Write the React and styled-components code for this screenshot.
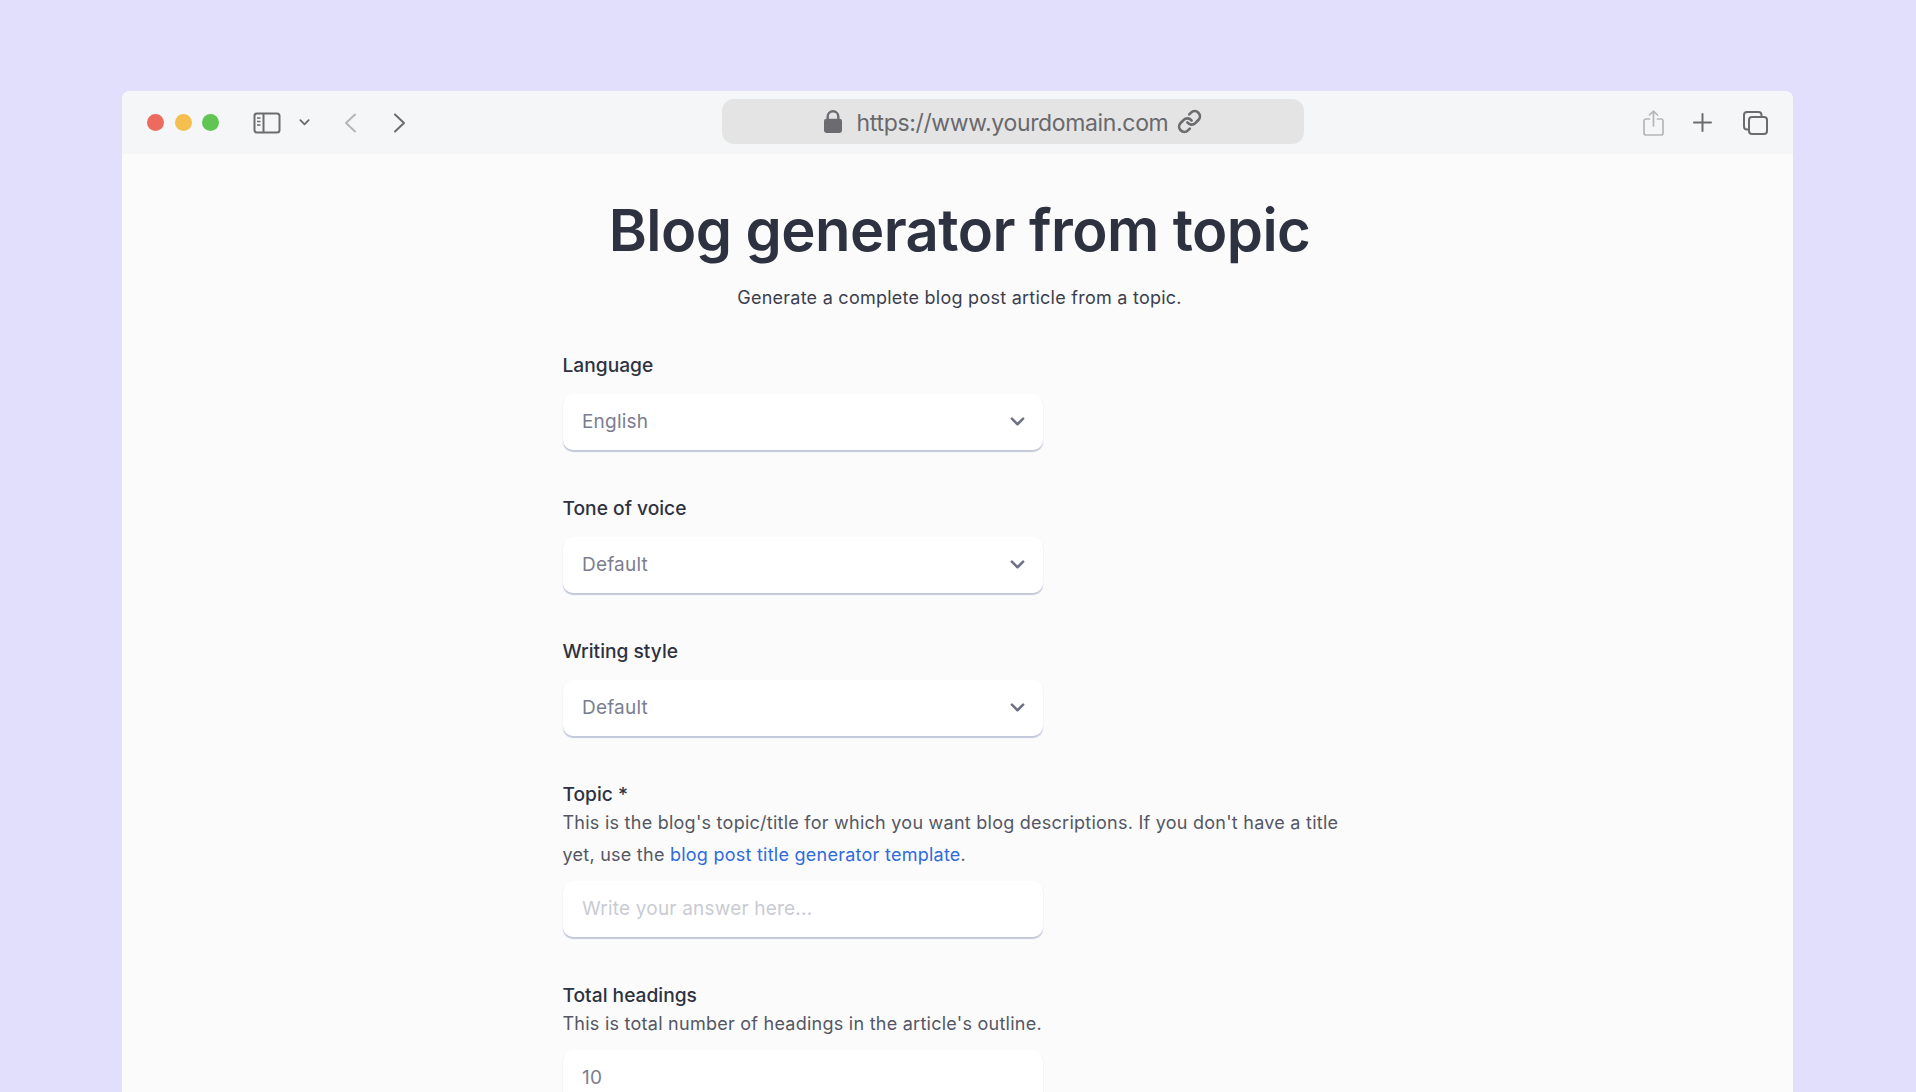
import React from "react";
import styled, { createGlobalStyle } from "styled-components";

const Global = createGlobalStyle`
  html, body { margin: 0; padding: 0; height: 100%; overflow: hidden; background: #e1dffc; }
  * { box-sizing: border-box; }
  body { font-family: Inter, "Liberation Sans", sans-serif; }
`;

const Page = styled.div`
  height: 1092px;
  overflow: hidden;
  padding: 91px 123px 0 122px;
  background: #e1dffc;
`;
const Win = styled.div`
  height: 1001px;
  background: #fbfbfc;
  border-radius: 8px 8px 0 0;
  overflow: hidden;
`;
const Toolbar = styled.header`
  height: 63px;
  background: #f5f6f7;
  display: flex;
  align-items: center;
  padding: 0 25px 0 25px;
  position: relative;
`;
const Dots = styled.div`
  display: flex;
  gap: 10.5px;
`;
const Dot = styled.span`
  width: 17px;
  height: 17px;
  border-radius: 50%;
  background: ${(p) => p.$c};
`;
const NavGroup = styled.div`
  display: flex;
  align-items: center;
  margin-left: 34px;
  width: 176px;
  & > svg { flex: none; display: block; }
`;
const Address = styled.div`
  width: 582px;
  height: 45px;
  margin-left: 293px;
  margin-top: -2px;
  border-radius: 12px;
  background: #e4e4e4;
  display: flex;
  align-items: center;
  justify-content: center;
  color: #69696c;
  font-size: 23px;
  letter-spacing: -0.35px;
  white-space: nowrap;
  & > svg { flex: none; }
`;
const Url = styled.span`
  margin: 2px 9px 0 15px;
`;
const Tools = styled.div`
  margin-left: auto;
  display: flex;
  align-items: center;
  & > svg { flex: none; display: block; }
`;
const Body = styled.main`
  padding: 44px 0 0 4px;
`;
const Title = styled.h1`
  margin: 0;
  text-align: center;
  font-size: 58px;
  line-height: 64px;
  font-weight: 600;
  color: #2e3240;
  letter-spacing: -0.55px;
`;
const Sub = styled.p`
  margin: 22px 0 0;
  text-align: center;
  font-size: 18px;
  line-height: 28px;
  color: #3b3f4d;
  letter-spacing: 0.25px;
`;
const Form = styled.form`
  width: 794px;
  margin: 39px auto 0;
`;
const Field = styled.div`
  margin-bottom: 44.5px;
`;
const Label = styled.div`
  font-size: 19.2px;
  line-height: 28px;
  font-weight: 500;
  color: #2e3240;
`;
const Help = styled.div`
  font-size: 18px;
  line-height: 32px;
  color: #545763;
  letter-spacing: 0.25px;
  margin-top: -1px;
`;
const HelpLink = styled.a`
  color: #2f6bdc;
  text-decoration: none;
`;
const Control = styled.div`
  width: 480px;
  height: 55.5px;
  margin-top: ${(p) => p.$mt ?? 15}px;
  background: #fff;
  border-radius: 10px;
  box-shadow: 0 1.5px 1px rgba(185, 190, 212, 0.85);
  display: flex;
  align-items: center;
  justify-content: space-between;
  padding: 0 18px 0 19.5px;
  font-size: 19px;
  color: ${(p) => (p.$ph ? "#c9cbd3" : "#7b7e90")};
  letter-spacing: 0.2px;
`;

const Sidebar = () => (
  <svg width="28" height="22" viewBox="0 0 28 22" fill="none" stroke="#6c6c6e" strokeWidth="2">
    <rect x="1.5" y="1.5" width="25" height="19" rx="2.5" />
    <path d="M10.5 1.5v19" />
    <path d="M4 6h3.5M4 9.5h3.5M4 13h3.5" strokeWidth="1.4" />
  </svg>
);
const Chevron = ({ w = 12, c = "#6c6c6e", sw = 2 }) => (
  <svg width={w} height={w * 0.6} viewBox="0 0 12 7.2" fill="none" stroke={c} strokeWidth={sw} strokeLinecap="round" strokeLinejoin="round">
    <path d="M1.5 1.3L6 5.8l4.5-4.5" />
  </svg>
);
const Arrow = ({ dir, c, ml }) => (
  <svg style={{ marginLeft: ml }} width="13" height="20" viewBox="0 0 13 20" fill="none" stroke={c} strokeWidth="2" strokeLinecap="round" strokeLinejoin="round">
    <path d={dir === "l" ? "M11 1.5L2 10l9 8.5" : "M2 1.5L11 10l-9 8.5"} />
  </svg>
);
const Lock = () => (
  <svg width="18" height="23" viewBox="0 0 18 23" fill="#6c6c70">
    <path d="M2.5 9V6.5a6.5 6.5 0 0 1 13 0V9h-2.4V6.5a4.1 4.1 0 0 0-8.2 0V9z" />
    <rect x="0" y="8.7" width="18" height="14.3" rx="2.4" />
  </svg>
);
const Chain = () => (
  <svg width="25" height="25" viewBox="0 0 24 24" fill="none" stroke="#6c6c70" strokeWidth="2.6" strokeLinecap="round" strokeLinejoin="round">
    <path d="M10 13a5 5 0 0 0 7.54.54l3-3a5 5 0 0 0-7.07-7.07l-1.72 1.71" />
    <path d="M14 11a5 5 0 0 0-7.54-.54l-3 3a5 5 0 0 0 7.07 7.07l1.71-1.71" />
  </svg>
);
const Share = () => (
  <svg width="21" height="26" viewBox="0 0 21 26" fill="none" stroke="#b5b6b8" strokeWidth="1.7" strokeLinecap="round" strokeLinejoin="round">
    <path d="M6.5 9H3a2 2 0 0 0-2 2v12a2 2 0 0 0 2 2h15a2 2 0 0 0 2-2V11a2 2 0 0 0-2-2h-3.5" />
    <path d="M10.5 16V1.5M6.5 5l4-3.8 4 3.8" />
  </svg>
);
const Plus = () => (
  <svg style={{ marginLeft: 29 }} width="19" height="19" viewBox="0 0 19 19" fill="none" stroke="#6c6c6e" strokeWidth="2" strokeLinecap="round">
    <path d="M9.5 1v17M1 9.5h17" />
  </svg>
);
const Tabs = () => (
  <svg style={{ marginLeft: 31 }} width="25" height="24" viewBox="0 0 25 24" fill="none" stroke="#6c6c6e" strokeWidth="2">
    <path d="M5 18.5H4a3 3 0 0 1-3-3V4a3 3 0 0 1 3-3h11.5a3 3 0 0 1 3 3v1.5" />
    <rect x="6" y="6" width="18" height="17" rx="3" />
  </svg>
);

export default function App() {
  return (
    <Page>
      <Global />
      <Win>
        <Toolbar>
          <Dots>
            <Dot $c="#ec6a5e" />
            <Dot $c="#f4bf4f" />
            <Dot $c="#61c554" />
          </Dots>
          <NavGroup>
            <Sidebar />
            <span style={{ width: 18 }} />
            <Chevron w={11} />
            <Arrow dir="l" c="#b4b5b7" ml={34} />
            <Arrow dir="r" c="#6c6c6e" ml={36} />
          </NavGroup>
          <Address>
            <Lock />
            <Url>https://www.yourdomain.com</Url>
            <Chain />
          </Address>
          <Tools>
            <Share />
            <Plus />
            <Tabs />
          </Tools>
        </Toolbar>
        <Body>
          <Title>Blog generator from topic</Title>
          <Sub>Generate a complete blog post article from a topic.</Sub>
          <Form>
            <Field>
              <Label>Language</Label>
              <Control>English<Chevron w={15} c="#6e7184" sw={2} /></Control>
            </Field>
            <Field>
              <Label>Tone of voice</Label>
              <Control>Default<Chevron w={15} c="#6e7184" sw={2} /></Control>
            </Field>
            <Field>
              <Label>Writing style</Label>
              <Control>Default<Chevron w={15} c="#6e7184" sw={2} /></Control>
            </Field>
            <Field>
              <Label>Topic *</Label>
              <Help>
                This is the blog's topic/title for which you want blog descriptions. If you don't have a title yet, use the{" "}
                <HelpLink href="#">blog post title generator template</HelpLink>.
              </Help>
              <Control $ph $mt={10}>Write your answer here...</Control>
            </Field>
            <Field>
              <Label>Total headings</Label>
              <Help>This is total number of headings in the article's outline.</Help>
              <Control $mt={10}>10</Control>
            </Field>
          </Form>
        </Body>
      </Win>
    </Page>
  );
}
